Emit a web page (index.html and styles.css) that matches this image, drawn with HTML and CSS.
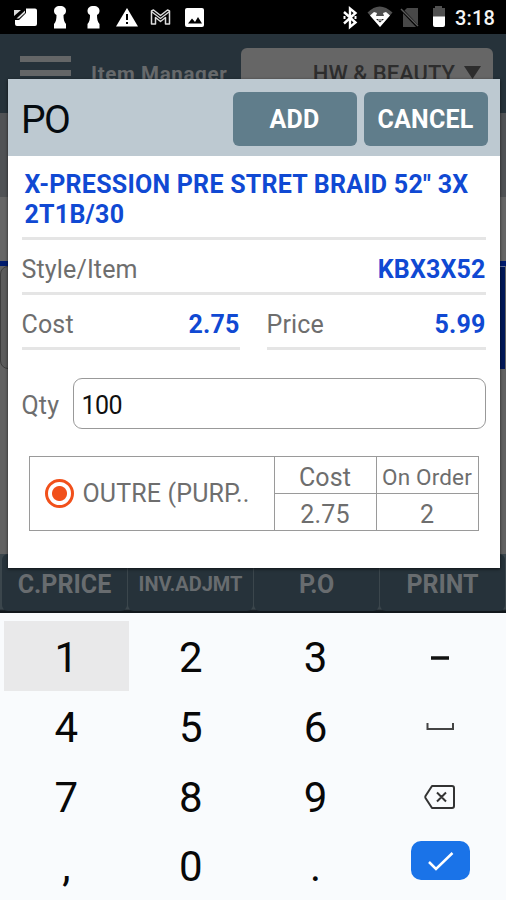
FILE: index.html
```html
<!DOCTYPE html>
<html lang="en">
<head>
<meta charset="utf-8">
<title>Item Manager</title>
<link rel="stylesheet" href="styles.css">
</head>
<body>
<div class="statusbar">
  <svg class="status-left" width="210" height="34" viewBox="0 0 210 34" fill="#fff">
    <path d="M26 8.500H35q2 0 2 2V24q0 2-2 2H17q-2 0-2-2V20H19L26 13Z"/>
    <path d="M14 16V10H21ZM16.500 18.500L25 10.500V13L19 18.500Z" fill="#ddd"/>
    <path id="pawn" d="M60 6c4 0 6 2 6 5 0 2-1 3-2.500 4 0 4 .5 7 2.500 9v4.500H54V24c2-2 2.500-5 2.500-9-1.500-1-2.500-2-2.500-4 0-3 2-5 6-5Z"/>
    <use href="#pawn" x="33.500"/>
    <path d="M127 8L138 26.500H116Z"/><path d="M126 14h2v6h-2zm0 8h2v2h-2z" fill="#000"/>
    <path d="M151.500 24V11l2-1 7 5.500 7-5.500 2 1v13h-4v-6.500l-5 4-5-4V24Z" fill="#000" stroke="#ddd" stroke-width="1.500" stroke-linejoin="round"/>
    <path d="M152 12l8.500 6.500L169 12" fill="none" stroke="#ddd" stroke-width="1.300"/>
    <rect x="185" y="8" width="19" height="19" rx="2"/>
    <path d="M188 23.500l4-5 3 3.500 3-5 4 6.500Z" fill="#000"/>
  </svg>
  <svg class="status-right" width="115" height="34" viewBox="335 0 115 34" fill="none">
    <path d="M344 12l11.500 10.500-5.500 4.500V8.500l5.500 4.500L344 23.500" stroke="#fff" stroke-width="2.400"/>
    <path d="M344.500 16v3M355.500 16v3" stroke="#fff" stroke-width="2"/>
    <path d="M367.500 12.500q12-12 25 0L380 27Z" fill="#505050"/>
    <path d="M370 15.500l4-3.500 3 1-1 3h8l-1-3 3-1 4 3.500L380 27Z" fill="#fff"/>
    <path d="M376 19h8l-4 3.500Z" fill="#222"/><path d="M378 20h4" stroke="#fff"/>
    <path d="M407 8h11v19h-15V12Z" fill="#484848"/><path d="M401 9l18 19" stroke="#000" stroke-width="3"/><path d="M401 9l17 17" stroke="#5a5a5a" stroke-width="1.500"/>
    <path d="M433 8h2V6h7v2h3v9h-12Z" fill="#505050"/><path d="M433 16.500h12V25q0 2-2 2h-8q-2 0-2-2Z" fill="#fff"/>
  </svg>
  <span class="clock">3:18</span>
</div>

<main class="screen">
  <header class="appbar">
    <div class="burger"><i></i><i></i><i></i></div>
    <span class="app-title">Item Manager</span>
    <div class="store"><span>HW &amp; BEAUTY</span><i class="caret"></i></div>
  </header>
  <div class="band"></div>
  <div class="subband"></div>
  <div class="rule"></div>
  <div class="tabs"><div class="tab"></div><div class="tab-active"></div></div>
  <div class="blank"></div>
  <nav class="actions">
    <div>C.PRICE</div><div class="small">INV.ADJMT</div><div class="tight">P.O</div><div>PRINT</div>
  </nav>

  <section class="dialog">
    <header class="dialog-head">
      <h1>PO</h1>
      <button>ADD</button>
      <button>CANCEL</button>
    </header>
    <div class="dialog-body">
      <div class="name">X-PRESSION PRE STRET BRAID 52" 3X<br>2T1B/30</div>
      <div class="field"><span>Style/Item</span><b>KBX3X52</b></div>
      <div class="pair">
        <div class="field"><span>Cost</span><b>2.75</b></div>
        <div class="field"><span>Price</span><b>5.99</b></div>
      </div>
      <div class="qty"><span>Qty</span><div class="input">100</div></div>
      <div class="vendor">
        <div class="vendor-name"><i class="radio"></i><span>OUTRE (PURP..</span></div>
        <div class="cell"><span>Cost</span></div>
        <div class="cell"><span class="narrow">On Order</span></div>
        <div class="cell"><span>2.75</span></div>
        <div class="cell"><span>2</span></div>
      </div>
    </div>
  </section>
</main>

<section class="keypad">
  <div class="key pressed">1</div><div class="key">2</div><div class="key">3</div>
  <div class="key"><svg width="60" height="40" viewBox="0 0 60 40"><path d="M21 20h18" stroke="#111" stroke-width="3.500"/></svg></div>
  <div class="key">4</div><div class="key">5</div><div class="key">6</div>
  <div class="key"><svg width="60" height="40" viewBox="0 0 60 40"><path d="M17.500 15v6h25.500v-6" fill="none" stroke="#444" stroke-width="2"/></svg></div>
  <div class="key">7</div><div class="key">8</div><div class="key">9</div>
  <div class="key"><svg width="60" height="40" viewBox="0 0 60 40" fill="none" stroke="#333" stroke-width="2"><path d="M22 9H42q2 0 2 2v18q0 2-2 2H22L15.500 21Q15 20 15.500 19ZM27 15.500l9 9M36 15.500l-9 9" stroke-linejoin="round"/></svg></div>
  <div class="key">,</div><div class="key">0</div><div class="key">.</div>
  <div class="key"><div class="enter"><svg width="59" height="39" viewBox="0 0 59 39"><path d="M18 21l7 7L41.500 12" fill="none" stroke="#fff" stroke-width="2.500"/></svg></div></div>
</section>
</body>
</html>
```

FILE: styles.css
```css
* { box-sizing: border-box; }
body { margin: 0; width: 506px; height: 900px; overflow: hidden; font-family: Roboto, "Liberation Sans", sans-serif; background: #f9fbfd; }
.statusbar { height: 34px; background: #000; display: flex; align-items: center; }
.status-right { margin-left: 125px; }
.clock { margin-left: 5px; color: #f5f5f5; font-size: 20px; font-weight: 500; line-height: 34px; padding-top: 1px; letter-spacing: .2px; }

.screen { position: relative; height: 579px; background: #626262; display: flex; flex-direction: column; }
.appbar { height: 79px; background: #26323a; display: flex; }
.burger { width: 51px; margin: 22px 0 0 20px; display: flex; flex-direction: column; gap: 8px; }
.burger i { height: 6px; background: #646667; }
.app-title { margin: 28px 0 0 20px; width: 150px; font-size: 20.500px; line-height: 24px; font-weight: 700; color: #66696b; letter-spacing: .65px; white-space: nowrap; }
.store { margin-top: 14px; width: 252px; height: 54px; border-radius: 6px; background: #666; display: flex; padding: 12px 12px 0 0; justify-content: flex-end; gap: 9px; font-size: 22px; line-height: 28px; font-weight: 500; color: #2d2d2d; }
.caret { width: 17px; height: 13px; margin-top: 6px; background: #2d2d2d; clip-path: polygon(0 0, 100% 0, 50% 100%); }
.band { height: 84px; background: #505255; }
.subband { height: 64px; background: #666; }
.rule { height: 5px; background: #001b6d; }
.tabs { height: 103px; display: flex; justify-content: space-between; }
.tab { width: 100px; border: 1px solid #3d3d3d; border-radius: 8px; background: #5c5c5c; }
.tab-active { width: 100px; margin-right: 1px; background: #001757; border-top: 1px solid #66739b; }
.blank { flex: 1; }
.actions { height: 59px; display: grid; grid-template-columns: repeat(4, 1fr); column-gap: 1px; padding: 0 1px 0 2px; background: linear-gradient(#3b464c 0 55px, #11171c 57px); }
.actions div { background: #26323a; border-radius: 6px; height: 57px; font-size: 25px; font-weight: 700; line-height: 61px; color: #686c6f; text-align: center; }
.actions .small { font-size: 20px; }
.actions .tight { letter-spacing: -.3px; }

.dialog { position: absolute; left: 7.500px; top: 45px; width: 492px; height: 489px; background: #fff; box-shadow: 0 1px 3px rgba(0,0,0,.65); }
.dialog-head { height: 77px; background: #bdc9d1; display: flex; align-items: center; gap: 7px; padding: 2px 12px 0 13.500px; }
h1 { flex: 1; margin: 2px 0 0; font-size: 39px; line-height: 46px; font-weight: 400; color: #050b10; letter-spacing: -1.500px; }
button { width: 124px; height: 54px; padding: 2px 0 0; border: 0; border-radius: 6px; background: #607d8b; color: #fff; font: 700 25px/50px Roboto, sans-serif; letter-spacing: .2px; white-space: nowrap; }
.dialog-body { padding: 0 14px; color: #6e6e6e; font-size: 25px; letter-spacing: .15px; }
.name { height: 84px; padding: 14px 0 0 3px; line-height: 30px; font-size: 25px; font-weight: 700; color: #1049d3; letter-spacing: .24px; border-bottom: 3px solid #e5e5e5; white-space: nowrap; }
.field { height: 55px; display: flex; justify-content: space-between; line-height: 60px; border-bottom: 3px solid #e5e5e5; }
.field b { color: #1049d3; font-weight: 700; }
.pair { display: grid; grid-template-columns: 218px 219px; justify-content: space-between; }
.qty { margin-top: 28px; height: 51px; display: flex; justify-content: space-between; line-height: 56px; }
.input { width: 413px; border: 1.500px solid #999; border-radius: 9px; color: #101010; padding-left: 8px; line-height: 53px; letter-spacing: -.6px; }
.vendor { margin: 27px 7px 0; height: 75px; display: grid; grid-template-columns: 245px 102px 102px; grid-template-rows: 37px 37px; border: 1px solid #9a9a9a; border-width: 1px 0 0 1px; }
.vendor-name { grid-row: 1 / 3; display: flex; align-items: center; padding-left: 15px; gap: 9px; border: 1px solid #9a9a9a; border-width: 0 1px 1px 0; white-space: nowrap; }
.radio { width: 29px; height: 29px; border: 3px solid #f1501b; border-radius: 50%; background: radial-gradient(circle, #f1501b 7px, #fff 8px); }
.cell { display: flex; justify-content: center; line-height: 42px; border: 1px solid #9a9a9a; border-width: 0 1px 1px 0; white-space: nowrap; }
.narrow { font-size: 22.500px; line-height: 40px; }

.keypad { height: 287px; padding: 8px 3px 0 4px; background: #f9fbfd; display: grid; grid-template-columns: repeat(4, 124.600px); grid-auto-rows: 69.700px; }
.key { display: flex; align-items: center; justify-content: center; font-size: 42px; line-height: 70px; color: #080808; padding: 5px 0 0; }
.key svg { margin-top: -1px; }
.pressed { background: #e9e9ea; }
.enter { width: 59px; height: 39px; margin-top: -13px; border-radius: 10px; background: #1a73e8; line-height: 0; }
.enter svg { margin-top: 0; display: block; }
```
